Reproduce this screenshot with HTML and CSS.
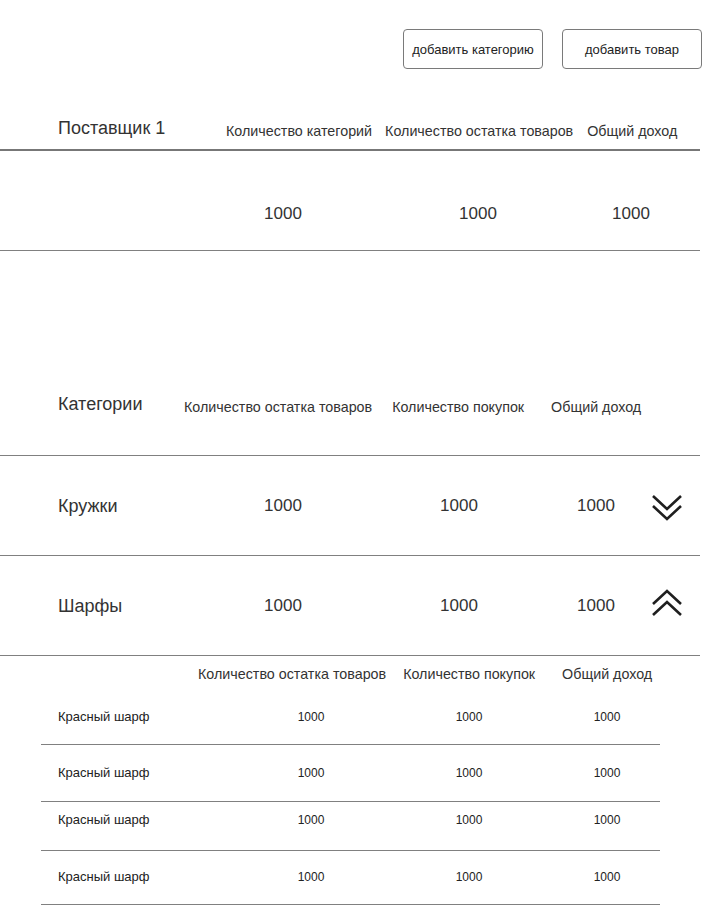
FILE: index.html
```html
<!DOCTYPE html>
<html lang="ru">
<head>
<meta charset="utf-8">
<title>Поставщик</title>
<link rel="stylesheet" href="styles.css">
</head>
<body>
<div class="page">
  <div class="toolbar">
    <button class="btn">добавить категорию</button>
    <button class="btn">добавить товар</button>
  </div>

  <div class="sup-head">
    <div class="sup-name">Поставщик 1</div>
    <div class="sup-labels">
      <span class="lbl">Количество категорий</span>
      <span class="lbl">Количество остатка товаров</span>
      <span class="lbl lbl-last">Общий доход</span>
    </div>
  </div>
  <div class="sup-vals">
    <span class="num">1000</span>
    <span class="num">1000</span>
    <span class="num">1000</span>
  </div>

  <div class="cat-head">
    <div class="cat-title">Категории</div>
    <span class="lbl">Количество остатка товаров</span>
    <span class="lbl lbl-buy">Количество покупок</span>
    <span class="lbl lbl-inc">Общий доход</span>
  </div>

  <div class="cat-row">
    <div class="cat-name">Кружки</div>
    <span class="num">1000</span>
    <span class="num num-2">1000</span>
    <span class="num num-3">1000</span>
    <svg class="chev" width="32" height="28" viewBox="0 0 32 28" aria-hidden="true">
      <polyline points="2,2 16,15 30,2" fill="none" stroke="#1f1f1f" stroke-width="2.6"/>
      <polyline points="2,12 16,25 30,12" fill="none" stroke="#1f1f1f" stroke-width="2.6"/>
    </svg>
  </div>

  <div class="cat-row">
    <div class="cat-name">Шарфы</div>
    <span class="num">1000</span>
    <span class="num num-2">1000</span>
    <span class="num num-3">1000</span>
    <svg class="chev chev-up" width="32" height="28" viewBox="0 0 32 28" aria-hidden="true">
      <polyline points="2,15 16,2 30,15" fill="none" stroke="#1f1f1f" stroke-width="2.6"/>
      <polyline points="2,26 16,13 30,26" fill="none" stroke="#1f1f1f" stroke-width="2.6"/>
    </svg>
  </div>

  <div class="sub">
    <div class="sub-head">
      <span class="lbl">Количество остатка товаров</span>
      <span class="lbl sub-buy">Количество покупок</span>
      <span class="lbl sub-inc">Общий доход</span>
    </div>
    <div class="sub-row r1">
      <div class="sub-name">Красный шарф</div>
      <span class="sn">1000</span>
      <span class="sn sn-2">1000</span>
      <span class="sn sn-3">1000</span>
    </div>
    <div class="sub-row r2">
      <div class="sub-name">Красный шарф</div>
      <span class="sn">1000</span>
      <span class="sn sn-2">1000</span>
      <span class="sn sn-3">1000</span>
    </div>
    <div class="sub-row r3">
      <div class="sub-name">Красный шарф</div>
      <span class="sn">1000</span>
      <span class="sn sn-2">1000</span>
      <span class="sn sn-3">1000</span>
    </div>
    <div class="sub-row r4">
      <div class="sub-name">Красный шарф</div>
      <span class="sn">1000</span>
      <span class="sn sn-2">1000</span>
      <span class="sn sn-3">1000</span>
    </div>
  </div>
</div>
</body>
</html>
```

FILE: styles.css
```css
* { box-sizing: border-box; }

html, body {
  margin: 0;
  padding: 0;
  background: #ffffff;
}

body {
  font-family: "Liberation Sans", Arial, sans-serif;
  color: #333333;
}

.page {
  width: 702px;
}

/* toolbar */
.toolbar {
  display: flex;
  justify-content: flex-end;
  gap: 19px;
  padding-top: 29px;
}

.btn {
  width: 140px;
  height: 40px;
  border: 1px solid #7a7a7a;
  border-radius: 4px;
  background: #ffffff;
  font-family: "Liberation Sans", Arial, sans-serif;
  font-size: 13px;
  color: #222222;
  padding: 0;
}

/* supplier */
.sup-head {
  display: flex;
  align-items: flex-end;
  width: 700px;
  height: 82px;
  padding-left: 58px;
  padding-bottom: 11px;
  border-bottom: 2px solid #777777;
}

.sup-name {
  width: 168px;
  font-size: 18px;
  line-height: 20px;
}

.sup-labels {
  display: flex;
  gap: 13px;
  margin-bottom: -1px;
}

.sup-labels .lbl-last { margin-left: 1px; }

.lbl {
  font-size: 14.3px;
  line-height: 16px;
  white-space: nowrap;
}

.num {
  width: 80px;
  text-align: center;
  font-size: 17px;
  line-height: 20px;
}

.sup-vals {
  display: flex;
  width: 700px;
  height: 100px;
  padding-left: 243px;
  padding-top: 53px;
  gap: 115px;
  border-bottom: 1px solid #808080;
}

.sup-vals .num:last-child {
  margin-left: -42px;
}

/* categories */
.cat-head {
  display: flex;
  align-items: flex-end;
  width: 700px;
  height: 205px;
  padding-left: 58px;
  padding-bottom: 41px;
  border-bottom: 1px solid #808080;
}

.cat-title {
  width: 126px;
  font-size: 18px;
  line-height: 20px;
}

.cat-head .lbl {
  margin-bottom: -1px;
}

.cat-head .lbl-buy { margin-left: 20px; }
.cat-head .lbl-inc { margin-left: 27px; }

.cat-row {
  display: flex;
  align-items: center;
  width: 700px;
  height: 100px;
  padding-left: 58px;
  border-bottom: 1px solid #808080;
}

.cat-name {
  width: 185px;
  font-size: 18px;
  line-height: 20px;
}

.cat-row .num-2 { margin-left: 96px; }
.cat-row .num-3 { margin-left: 57px; }

.chev {
  display: block;
  margin-left: 15px;
  margin-top: 4px;
}

.chev-up {
  margin-top: -6px;
}

/* sub table */
.sub {
  width: 619px;
  margin-left: 41px;
}

.sub-head {
  display: flex;
  height: 32px;
  padding-left: 157px;
  padding-top: 10px;
}

.sub-head .sub-buy { margin-left: 17px; }
.sub-head .sub-inc { margin-left: 27px; }

.sub-row {
  display: flex;
  align-items: flex-start;
  padding-left: 17px;
  border-bottom: 1px solid #808080;
  line-height: 14px;
}

.r1 { height: 57px; padding-top: 22px; }
.r2 { height: 57px; padding-top: 21px; }
.r3 { height: 49px; padding-top: 11px; }
.r4 { height: 54px; padding-top: 19px; }

.sub-name {
  width: 223px;
  font-size: 13px;
  color: #222222;
}

.sn {
  width: 60px;
  text-align: center;
  font-size: 12px;
  color: #222222;
}

.sn-2 { margin-left: 98px; }
.sn-3 { margin-left: 78px; }
```
